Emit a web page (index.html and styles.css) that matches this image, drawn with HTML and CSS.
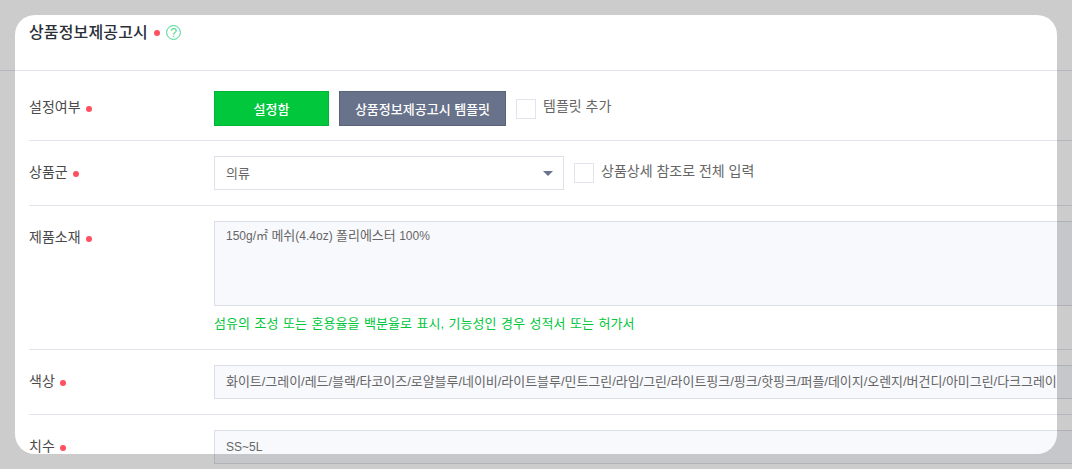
FILE: index.html
```html
<!DOCTYPE html>
<html lang="ko">
<head>
<meta charset="utf-8">
<title>상품정보제공고시</title>
<link rel="stylesheet" href="styles.css">
</head>
<body>
<div class="page">
  <header class="head">
    <h2 class="title">상품정보제공고시</h2>
    <span class="dot"></span>
    <svg class="help" width="15" height="15" viewBox="0 0 15 15"><circle cx="7.5" cy="7.5" r="6.9" fill="none" stroke="#3fd68a" stroke-width="1"/><text x="7.5" y="11.5" text-anchor="middle" class="help-q">?</text></svg>
  </header>
  <section class="row row-1">
    <div class="label">설정여부<span class="dot"></span></div>
    <div class="field">
      <button class="btn btn-green">설정함</button>
      <button class="btn btn-slate">상품정보제공고시 템플릿</button>
      <label class="check"><span class="box"></span><span class="check-text">템플릿 추가</span></label>
    </div>
  </section>
  <section class="row row-2">
    <div class="label">상품군<span class="dot"></span></div>
    <div class="field">
      <div class="select"><span class="select-text">의류</span><span class="caret"></span></div>
      <label class="check"><span class="box"></span><span class="check-text">상품상세 참조로 전체 입력</span></label>
    </div>
  </section>
  <section class="row row-3">
    <div class="label">제품소재<span class="dot"></span></div>
    <div class="field-col">
      <div class="input area">150g/㎡ <span class="ko">메쉬</span>(4.4oz) <span class="ko">폴리에스터</span> 100%</div>
      <p class="hint">섬유의 조성 또는 혼용율을 백분율로 표시, 기능성인 경우 성적서 또는 허가서</p>
    </div>
  </section>
  <section class="row row-4">
    <div class="label">색상<span class="dot"></span></div>
    <div class="field-col">
      <div class="input colors">화이트/그레이/레드/블랙/타코이즈/로얄블루/네이비/라이트블루/민트그린/라임/그린/라이트핑크/핑크/핫핑크/퍼플/데이지/오렌지/버건디/아미그린/다크그레이</div>
    </div>
  </section>
  <section class="row row-5">
    <div class="label">치수<span class="dot"></span></div>
    <div class="field-col">
      <div class="input">SS~5L</div>
    </div>
  </section>
</div>
<div class="spotlight"></div>
</body>
</html>
```
FILE: styles.css
```css
* { box-sizing: border-box; }
html, body { margin: 0; height: 100%; overflow: hidden; background: #fff; }
body {
  font-family: "Liberation Sans", "Noto Sans CJK KR", sans-serif;
  color: #444;
  font-size: 13px;
}
.page { width: 1072px; }
.head {
  height: 71px;
  border-bottom: 1px solid #e2e4ec;
  padding: 23px 0 0 29px;
  display: flex;
  align-items: flex-start;
}
.title { margin: 0; font-size: 16px; line-height: 20px; font-weight: 500; letter-spacing: 0.15px; color: #2a2f38; }
.head .dot { margin: 7px 0 0 6px; }
.help { margin: 2px 0 0 6px; }
.help-q { font-size: 12px; fill: #3fd68a; font-family: "Liberation Sans", sans-serif; }
.dot {
  display: inline-block;
  width: 6px;
  height: 6px;
  border-radius: 50%;
  background: #ff5061;
  margin-left: 5px;
  vertical-align: 0;
}
.row {
  margin-left: 29px;
  border-bottom: 1px solid #e2e4ec;
  display: flex;
  align-items: flex-start;
}
.row-1 { height: 70px; padding-top: 20px; }
.row-2 { height: 65px; padding-top: 15px; }
.row-3 { height: 144px; padding-top: 15px; }
.row-4 { height: 65px; padding-top: 15px; }
.row-5 { height: 65px; padding-top: 15px; border-bottom: 0; }
.label {
  width: 185px;
  flex: none;
  font-size: 14px;
  line-height: 32px;
  color: #4a4a4a;
}
.field { display: flex; align-items: center; gap: 10px; }
.field-col { flex: 1; min-width: 0; }
.btn {
  height: 35px;
  border: 1px solid;
  font: inherit;
  font-weight: 500;
  color: #fff;
  padding: 0;
}
.btn-green { width: 115px; background: #00c73c; border-color: #00b536; }
.btn-slate { width: 167px; background: #68728a; border-color: #5a6378; }
.check { display: flex; align-items: center; gap: 7px; color: #666; font-size: 14px; }
.check-text { padding-bottom: 5px; line-height: 18px; }
.box { width: 20px; height: 20px; background: #fff; border: 1px solid #e2e4ec; }
.select {
  width: 350px;
  height: 34px;
  border: 1px solid #dfe1e8;
  padding: 0 10px 0 11px;
  font-size: 13px;
  color: #666;
  display: flex;
  justify-content: space-between;
  align-items: center;
}
.select-text { padding-bottom: 2px; }
.caret {
  width: 0;
  height: 0;
  border-left: 5px solid transparent;
  border-right: 5px solid transparent;
  border-top: 5px solid #68728a;
}
.input {
  height: 34px;
  background: #f8f9fd;
  border: 1px solid #dcdee8;
  border-right: 0;
  padding: 0 0 0 11px;
  line-height: 32px;
  font-size: 12px;
  white-space: nowrap;
  overflow: hidden;
  color: #666;
}
.colors { font-size: 13px; letter-spacing: -0.04px; line-height: 32px; }
.ko { font-size: 13px; }
.area { height: 85px; line-height: 27px; }
.hint { margin: 9px 0 0; font-size: 13px; line-height: 18px; word-spacing: 1px; color: #00c73c; }
.spotlight {
  position: absolute;
  left: 15px;
  top: 15px;
  width: 1042px;
  height: 439px;
  border-radius: 20px;
  box-shadow: 0 0 0 2000px rgba(0, 0, 0, 0.2);
}
```
